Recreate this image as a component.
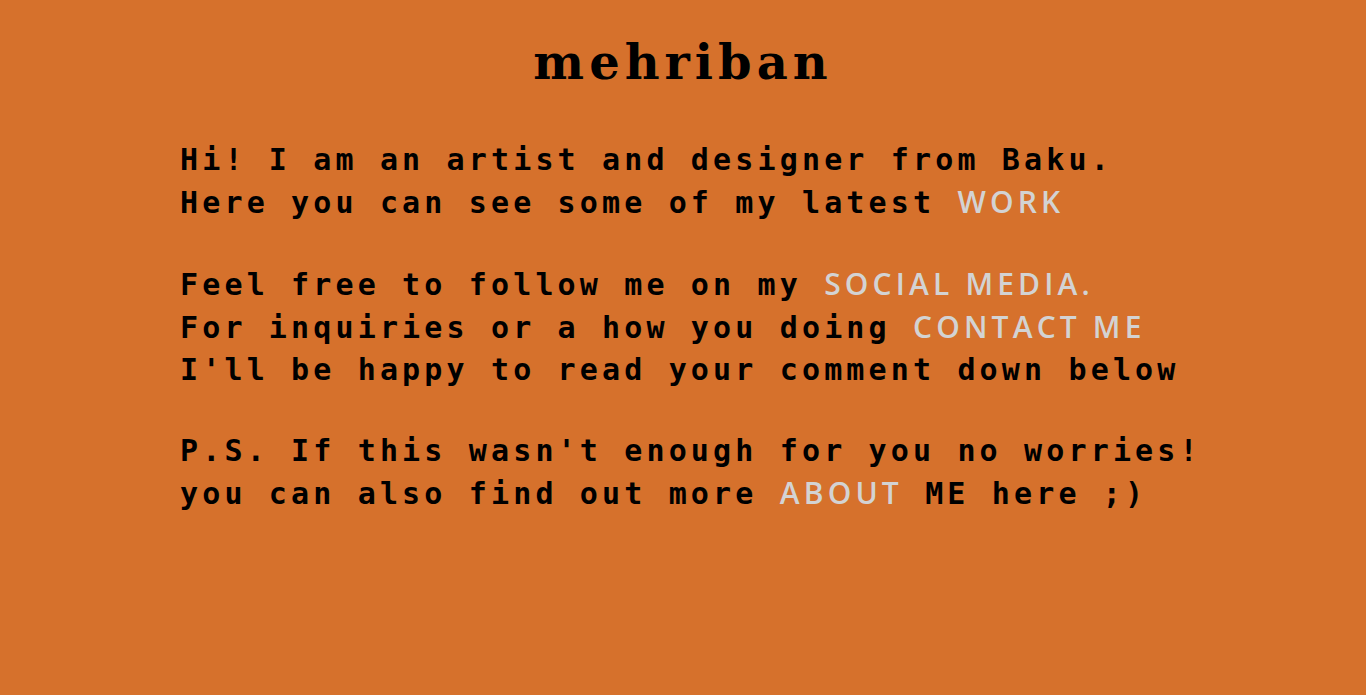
export default function App() {
    const link = "text-[#d3d3d3] [font-family:'Open_Sans',sans-serif] font-semibold";

    return (
        <div className="min-h-[695px] w-full bg-[#d6712c] text-black">
            {/* title */}
            <div className="pt-[32px] text-center">
                <h1 className="text-[48px] leading-[60px] font-bold tracking-[5px] [font-family:'DejaVu_Serif',serif]">
                    mehriban
                </h1>
            </div>

            {/* intro text */}
            <div className="pl-[180px] pt-[47px] text-[30px] leading-[42px] font-bold tracking-[4.15px] whitespace-pre [font-family:'DejaVu_Sans_Mono',monospace]">
                <p>
                    Hi! I am an artist and designer from Baku.
                    <br />
                    Here you can see some of my latest <span className={link}>WORK</span>
                </p>
                <p className="mt-[39px]">
                    Feel free to follow me on my <span className={link}>SOCIAL MEDIA.</span>
                    <br />
                    For inquiries or a how you doing <span className={link}>CONTACT ME</span>
                    <br />
                    I'll be happy to read your comment down below
                </p>
                <p className="mt-[39px]">
                    P.S. If this wasn't enough for you no worries!
                    <br />
                    you can also find out more <span className={link}>ABOUT</span> ME here ;)
                </p>
            </div>
        </div>
    );
}
